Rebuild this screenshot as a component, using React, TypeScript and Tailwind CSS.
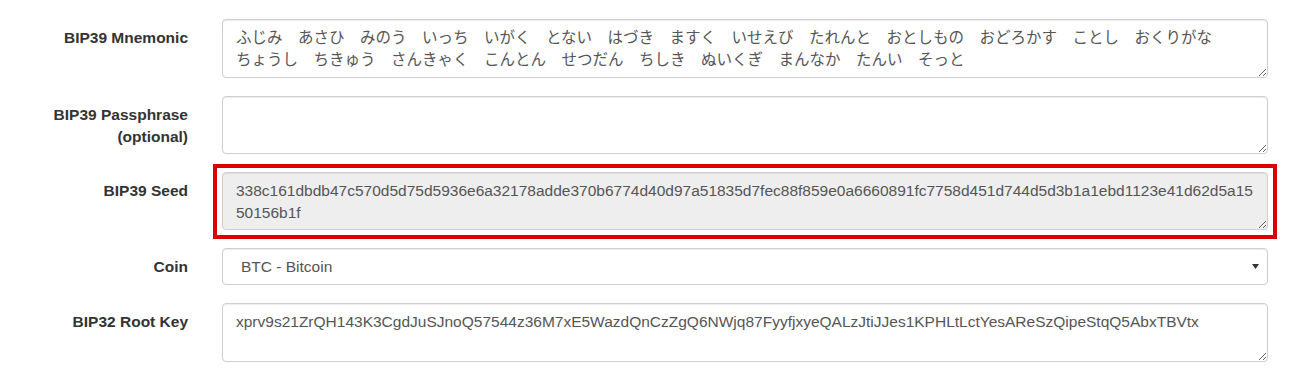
const mnemonic =
  "ふじみ　あさひ　みのう　いっち　いがく　とない　はづき　ますく　いせえび　たれんと　おとしもの　おどろかす　ことし　おくりがな　ちょうし　ちきゅう　さんきゃく　こんとん　せつだん　ちしき　ぬいくぎ　まんなか　たんい　そっと";

const seed =
  "338c161dbdb47c570d5d75d5936e6a32178adde370b6774d40d97a51835d7fec88f859e0a6660891fc7758d451d744d5d3b1a1ebd1123e41d62d5a1550156b1f";

const rootKey =
  "xprv9s21ZrQH143K3CgdJuSJnoQ57544z36M7xE5WazdQnCzZgQ6NWjq87FyyfjxyeQALzJtiJJes1KPHLtLctYesAReSzQipeStqQ5AbxTBVtx";

const field =
  "block w-full resize-y rounded-[4px] border border-[#cfcfcf] px-[13px] pt-[7px] pb-[6px] text-[15.5px] leading-[22px] text-[#555] shadow-[inset_0_1px_1px_rgba(0,0,0,0.075)] outline-none";

const Row = ({ label, children }: { label: React.ReactNode; children: React.ReactNode }) => (
  <div className="flex items-start gap-[34px]">
    <label className="w-[188px] shrink-0 pt-[8px] text-right text-[15.5px] leading-[22px] font-bold text-[#333]">
      {label}
    </label>
    <div className="flex-1">{children}</div>
  </div>
);

export default function App() {
  return (
    <div
      className="flex h-[383px] w-[1299px] flex-col gap-[18px] bg-white pt-[19px] pr-[31px]"
      style={{ fontFamily: '"Liberation Sans", Arial, "Noto Sans CJK JP", sans-serif' }}
    >
      <Row label="BIP39 Mnemonic">
        <textarea
          className={field + " h-[59px] bg-white break-keep"}
          defaultValue={mnemonic}
          readOnly
        />
      </Row>

      <Row label="BIP39 Passphrase (optional)">
        <textarea className={field + " h-[58px] bg-white"} defaultValue="" readOnly />
      </Row>

      <Row label="BIP39 Seed">
        <div className="relative">
          <textarea className={field + " h-[58px] bg-[#eee]"} defaultValue={seed} readOnly />
          {/* red highlight frame drawn over the seed field */}
          <div className="pointer-events-none absolute -top-[8px] -right-[9px] -bottom-[9px] -left-[9px] border-4 border-[#dd0000]" />
        </div>
      </Row>

      <Row label="Coin">
        <div className="flex h-[37px] items-center justify-between rounded-[4px] border border-[#cfcfcf] bg-white pl-[18px] pr-[8px] text-[15.5px] text-[#555] shadow-[inset_0_1px_1px_rgba(0,0,0,0.075)]">
          <span>BTC - Bitcoin</span>
          <svg width="7" height="5" viewBox="0 0 7 5">
            <path d="M0 0 L7 0 L3.5 5 Z" fill="#333" />
          </svg>
        </div>
      </Row>

      <Row label="BIP32 Root Key">
        <textarea className={field + " h-[59px] bg-white"} defaultValue={rootKey} readOnly />
      </Row>
    </div>
  );
}
